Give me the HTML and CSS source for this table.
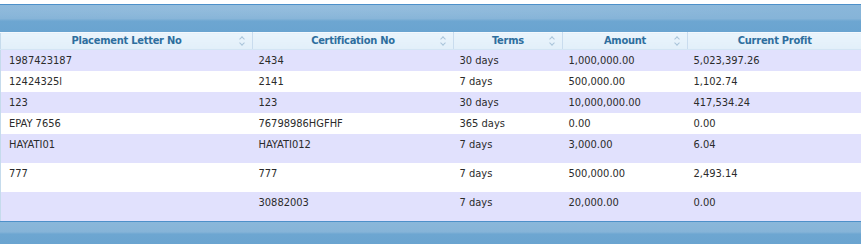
FILE: index.html
```html
<!DOCTYPE html>
<html>
<head>
<meta charset="utf-8">
<link rel="stylesheet" href="styles.css">
</head>
<body>
<div class="grid">
  <div class="titlebar"></div>
  <table class="data">
    <colgroup>
      <col class="c1"><col class="c2"><col class="c3"><col class="c4"><col class="c5">
    </colgroup>
    <thead>
      <tr>
        <th><span class="lbl">Placement Letter No</span><span class="sort"></span></th>
        <th><span class="lbl">Certification No</span><span class="sort"></span></th>
        <th><span class="lbl">Terms</span><span class="sort"></span></th>
        <th><span class="lbl">Amount</span><span class="sort"></span></th>
        <th><span class="lbl">Current Profit</span></th>
      </tr>
    </thead>
    <tbody>
      <tr class="odd"><td>1987423187</td><td>2434</td><td>30 days</td><td>1,000,000.00</td><td>5,023,397.26</td></tr>
      <tr class="even"><td>12424325l</td><td>2141</td><td>7 days</td><td>500,000.00</td><td>1,102.74</td></tr>
      <tr class="odd"><td>123</td><td>123</td><td>30 days</td><td>10,000,000.00</td><td>417,534.24</td></tr>
      <tr class="even"><td>EPAY 7656</td><td>76798986HGFHF</td><td>365 days</td><td>0.00</td><td>0.00</td></tr>
      <tr class="odd tall"><td>HAYATI01</td><td>HAYATI012</td><td>7 days</td><td>3,000.00</td><td>6.04</td></tr>
      <tr class="even tall"><td>777</td><td>777</td><td>7 days</td><td>500,000.00</td><td>2,493.14</td></tr>
      <tr class="odd tall"><td></td><td>30882003</td><td>7 days</td><td>20,000.00</td><td>0.00</td></tr>
    </tbody>
  </table>
  <div class="footbar"></div>
</div>
</body>
</html>
```
FILE: styles.css
```css
html, body {
  margin: 0;
  padding: 0;
  background: #ffffff;
}
body {
  padding-top: 4px;
  font-family: "DejaVu Sans Condensed", "DejaVu Sans", sans-serif;
  font-stretch: condensed;
  font-size: 11px;
  color: #2b2b2b;
}
.grid {
  width: 861px;
}
.titlebar {
  height: 27px;
  border-top: 1px solid #4d90c9;
  background:
    radial-gradient(ellipse 90% 70% at 35% 10%, rgba(255,255,255,0.10), rgba(255,255,255,0) 70%),
    linear-gradient(#8ab7da 0, #86b4d8 50%, #6da6d1 60%, #6aa4d0 100%);
}
.footbar {
  height: 22px;
  border-top: 1px solid #4d90c9;
  background: linear-gradient(#8ab7da 0, #86b4d8 45%, #6da6d1 55%, #6aa4d0 100%);
}
.data {
  width: 861px;
  table-layout: fixed;
  border-collapse: collapse;
  border-spacing: 0;
  border-left: 1px solid #c5dbec;
}
.c1 { width: 252px; }
.c2 { width: 201px; }
.c3 { width: 109px; }
.c4 { width: 125px; }
.c5 { width: 174px; }
thead th {
  height: 16px;
  padding: 0 6px;
  border-top: 1px solid #f4f9fe;
  border-bottom: 1px solid #d3e5f4;
  border-right: 1px solid #c9dcee;
  background: linear-gradient(#eaf4fc, #e2eff9);
  color: #2e6e9e;
  font-weight: bold;
  letter-spacing: -0.25px;
  text-align: center;
  position: relative;
  line-height: 16px;
}
thead th:last-child { border-right: none; }
.sort {
  position: absolute;
  right: 6px;
  top: 3px;
  width: 7px;
  height: 10px;
}
.sort::before, .sort::after {
  content: "";
  position: absolute;
  left: 1px;
  width: 3px;
  height: 3px;
  border-left: 1.3px solid #a9c4da;
  border-top: 1.3px solid #a9c4da;
}
.sort::before { top: 1px; transform: rotate(45deg); }
.sort::after { top: 5px; transform: rotate(225deg); }
tbody td {
  height: 21px;
  padding: 0 6px;
  line-height: 13px;
  vertical-align: middle;
  white-space: nowrap;
  box-sizing: border-box;
}
tbody td:first-child { padding-left: 8px; }
tbody tr.tall td {
  height: 29px;
  vertical-align: top;
  padding-top: 4px;
}
tr.odd { background: #e1e1fd; }
tr.even { background: #ffffff; }
```
